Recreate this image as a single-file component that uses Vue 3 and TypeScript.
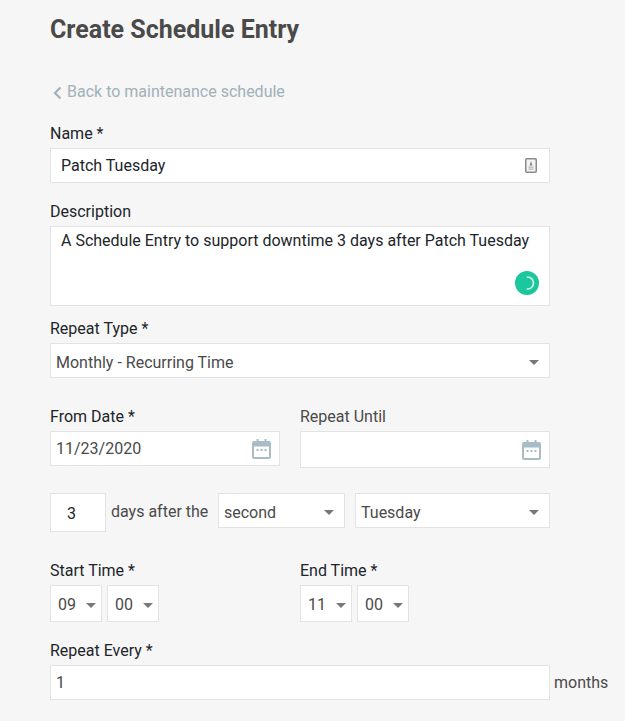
<template>
  <div class="page">
    <h1 class="title">Create Schedule Entry</h1>

    <a class="back">
      <svg class="back-icon" width="10" height="12" viewBox="0 0 10 12">
        <path d="M7.500 0.500 2 6l5.500 5.500" fill="none" stroke="#a0b1b9" stroke-width="2.200" />
      </svg>
      Back to maintenance schedule
    </a>

    <div class="group name-group">
      <label>Name *</label>
      <div class="field text-field name-field">
        <span>Patch Tuesday</span>
        <svg class="badge-icon" width="12" height="15" viewBox="0 0 12 15">
          <rect x="0.750" y="0.750" width="10.500" height="13.500" rx="1" fill="#f4f4f4" stroke="#8a8a8a" stroke-width="1.500" />
          <path d="M6 3 7.500 7.500h-3z" fill="#8a8a8a" />
          <path d="M3.500 8.500h5v1.200h-5zM3.500 10.500h5v1.200h-5z" fill="#b5b5b5" />
        </svg>
      </div>
    </div>

    <div class="group desc-group">
      <label>Description</label>
      <div class="field textarea">
        <span>A Schedule Entry to support downtime 3 days after Patch Tuesday</span>
        <div class="grammar">
          <svg width="24" height="24" viewBox="0 0 24 24">
            <path d="M12.500 6a6 6 0 0 1 0 12" fill="none" stroke="#d8f5ec" stroke-width="1.700" stroke-linecap="round" />
          </svg>
        </div>
      </div>
    </div>

    <div class="group type-group">
      <label>Repeat Type *</label>
      <div class="field select wide">
        <span>Monthly - Recurring Time</span>
        <i class="caret"></i>
      </div>
    </div>

    <div class="date-row">
      <div class="col">
        <label>From Date *</label>
        <div class="field date">
          <span>11/23/2020</span>
          <svg class="cal" width="19" height="20" viewBox="0 0 19 20">
            <path d="M2 2h2.500V0h2v2h6V0h2v2H17a2 2 0 0 1 2 2v14a2 2 0 0 1-2 2H2a2 2 0 0 1-2-2V4a2 2 0 0 1 2-2zm0 5.500V18h15V7.500z" fill="#a9bcc5" />
            <path d="M4.500 10h2v2h-2zM8.500 10h2v2h-2zM12.500 10h2v2h-2z" fill="#a9bcc5" />
          </svg>
        </div>
      </div>
      <div class="col">
        <label class="soft">Repeat Until</label>
        <div class="field date tall">
          <span></span>
          <svg class="cal" width="19" height="20" viewBox="0 0 19 20">
            <path d="M2 2h2.500V0h2v2h6V0h2v2H17a2 2 0 0 1 2 2v14a2 2 0 0 1-2 2H2a2 2 0 0 1-2-2V4a2 2 0 0 1 2-2zm0 5.500V18h15V7.500z" fill="#a9bcc5" />
            <path d="M4.500 10h2v2h-2zM8.500 10h2v2h-2zM12.500 10h2v2h-2z" fill="#a9bcc5" />
          </svg>
        </div>
      </div>
    </div>

    <div class="days-row">
      <div class="field days">3</div>
      <span class="days-text">days after the</span>
      <div class="field select ordinal">
        <span>second</span>
        <i class="caret"></i>
      </div>
      <div class="field select weekday">
        <span>Tuesday</span>
        <i class="caret"></i>
      </div>
    </div>

    <div class="time-row">
      <div v-for="t in times" :key="t.label" class="col">
        <label>{{ t.label }}</label>
        <div class="time-pair">
          <div class="field select time">
            <span>{{ t.hour }}</span>
            <i class="caret"></i>
          </div>
          <div class="field select time">
            <span>00</span>
            <i class="caret"></i>
          </div>
        </div>
      </div>
    </div>

    <div class="group every-group">
      <label>Repeat Every *</label>
      <div class="every-row">
        <div class="field text-field every">1</div>
        <span class="unit">months</span>
      </div>
    </div>
  </div>
</template>

<script setup lang="ts">
const times = [
  { label: "Start Time *", hour: "09" },
  { label: "End Time *", hour: "11" },
]
</script>

<style>
html,
body {
  background: #f6f6f6;
}
</style>

<style scoped>
.page {
  box-sizing: border-box;
  width: 625px;
  height: 721px;
  overflow: hidden;
  padding: 15px 0 0 50px;
  background: #f6f6f6;
  font-family: Roboto, "Liberation Sans", sans-serif;
  font-size: 16px;
  color: #212529;
}

.title {
  margin: 0;
  font-size: 25px;
  line-height: 29px;
  font-weight: 700;
  color: #4a4a4a;
}

.back {
  display: flex;
  align-items: center;
  gap: 4px;
  margin-top: 37px;
  height: 22px;
  color: #a0b1b9;
  line-height: 22px;
}

.back-icon {
  flex: none;
  margin: 1px 0 0 3px;
}

label {
  display: block;
  height: 26px;
  line-height: 24px;
  color: #212529;
}

label.soft {
  color: #4a4a4a;
}

.field {
  box-sizing: border-box;
  display: flex;
  align-items: center;
  background: #fff;
  border: 1px solid #e3e3e3;
  line-height: 22px;
}

.name-group {
  margin-top: 19px;
}

.text-field {
  width: 500px;
  height: 35px;
  padding: 0 10px;
}

.name-field {
  justify-content: space-between;
  padding-right: 12px;
}

.badge-icon {
  flex: none;
}

.desc-group {
  margin-top: 17px;
}

.textarea {
  position: relative;
  width: 500px;
  height: 80px;
  padding: 3px 10px;
  align-items: flex-start;
}

.grammar {
  position: absolute;
  right: 10px;
  bottom: 10px;
  width: 24px;
  height: 24px;
  border-radius: 50%;
  background: #1bc79c;
}

.grammar svg {
  display: block;
}

.type-group {
  margin-top: 11px;
}

.select {
  justify-content: space-between;
  padding: 0 10px 0 5px;
  color: #4a4a4a;
}

.caret {
  flex: none;
  width: 0;
  height: 0;
  margin-top: 1px;
  border-left: 5px solid transparent;
  border-right: 5px solid transparent;
  border-top: 5px solid #777;
}

.wide {
  width: 500px;
  height: 35px;
  padding-top: 4px;
}

.wide .caret,
.ordinal .caret,
.weekday .caret {
  margin-top: 0;
}

.date-row {
  display: flex;
  align-items: flex-start;
  gap: 20px;
  margin-top: 27px;
}

.col {
  flex: none;
  width: 230px;
}

.col + .col {
  width: 250px;
}

.date {
  justify-content: space-between;
  width: 100%;
  height: 35px;
  padding: 0 8px 0 5px;
  color: #4a4a4a;
}

.date.tall {
  height: 37px;
}

.cal {
  flex: none;
}

.days-row {
  display: flex;
  align-items: flex-start;
  margin-top: 25px;
}

.days {
  flex: none;
  width: 56px;
  height: 39px;
  padding: 2px 0 0 16px;
}

.days-text {
  flex: none;
  width: 98px;
  margin: 7px 9px 0 5px;
  line-height: 24px;
  color: #4a4a4a;
}

.ordinal {
  flex: none;
  width: 127px;
  height: 35px;
  margin-right: 10px;
  padding-top: 4px;
}

.weekday {
  flex: none;
  width: 195px;
  height: 35px;
  padding-top: 4px;
}

.time-row {
  display: flex;
  gap: 20px;
  margin-top: 27px;
}

.time-pair {
  display: flex;
  gap: 5px;
}

.time {
  width: 52px;
  height: 37px;
  padding: 2px 5px 0 7px;
}

.every-group {
  margin-top: 17px;
}

.every-row {
  display: flex;
  align-items: center;
}

.every {
  color: #4a4a4a;
  padding-left: 5px;
}

.unit {
  margin-left: 4px;
  color: #4a4a4a;
}
</style>
